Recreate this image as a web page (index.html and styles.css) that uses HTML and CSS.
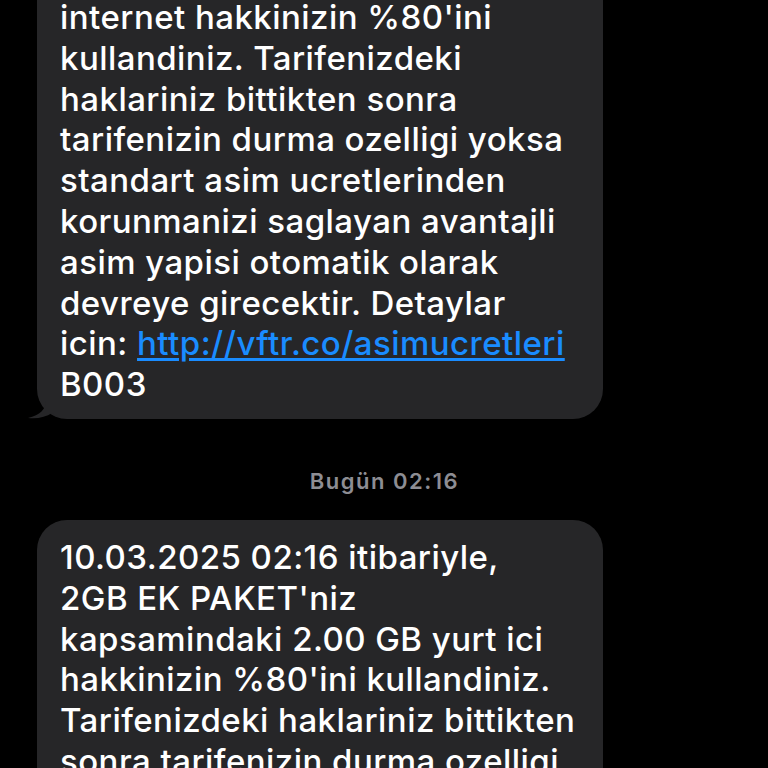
FILE: index.html
```
<!DOCTYPE html>
<html lang="tr">
<head>
<meta charset="utf-8">
<link rel="stylesheet" href="styles.css">
<title>Mesajlar</title>
</head>
<body>
<div class="thread">

    <div class="bubble bubble-cut">
        <p class="msg">
            <span class="line">internet hakkinizin %80'ini</span>
            <span class="line">kullandiniz. Tarifenizdeki</span>
            <span class="line">haklariniz bittikten sonra</span>
            <span class="line">tarifenizin durma ozelligi yoksa</span>
            <span class="line">standart asim ucretlerinden</span>
            <span class="line">korunmanizi saglayan avantajli</span>
            <span class="line">asim yapisi otomatik olarak</span>
            <span class="line">devreye girecektir. Detaylar</span>
            <span class="line">icin: <a class="link" href="#">http://vftr.co/asimucretleri</a></span>
            <span class="line">B003</span>
        </p>
        <svg class="tail" width="30" height="18" viewBox="0 0 30 18">
            <path d="M30 0 L18 0 C18 8 12 14 0 17 C10 18 18 16 24 12 C27 14 30 16 30 16 Z" fill="#262628"/>
        </svg>
    </div>

    <div class="stamp">Bugün 02:16</div>

    <div class="bubble">
        <p class="msg">
            <span class="line">10.03.2025 02:16 itibariyle,</span>
            <span class="line">2GB EK PAKET'niz</span>
            <span class="line">kapsamindaki 2.00 GB yurt ici</span>
            <span class="line">hakkinizin %80'ini kullandiniz.</span>
            <span class="line">Tarifenizdeki haklariniz bittikten</span>
            <span class="line">sonra tarifenizin durma ozelligi</span>
            <span class="line">yoksa standart asim ucretlerinden</span>
        </p>
    </div>

</div>
</body>
</html>
```
FILE: styles.css
```
html, body {
    margin: 0;
    background: #000000;
}

body {
    height: 768px;
    overflow: hidden;
    font-family: Inter, "Liberation Sans", sans-serif;
    color: #ffffff;
}

.thread {
    padding: 0 165px 0 37px;
}

.bubble {
    position: relative;
    width: 566px;
    box-sizing: border-box;
    background: #262628;
    border-radius: 30px;
    padding: 17px 22px 13px 23px;
}

.bubble-cut {
    margin-top: -3px;
    padding-top: 0;
    padding-bottom: 14px;
    border-top-left-radius: 0;
    border-top-right-radius: 0;
}

.msg {
    margin: 0;
    font-size: 33px;
    font-weight: 500;
    line-height: 40.8px;
    letter-spacing: 0.45px;
}

.line {
    display: block;
    white-space: nowrap;
}

.link {
    color: #1a8cff;
    text-decoration: underline;
    text-decoration-thickness: 3px;
    text-underline-offset: 3px;
}

.tail {
    position: absolute;
    left: -9px;
    bottom: 0;
}

.stamp {
    text-align: center;
    margin: 49px 0 26px 0;
    padding-left: 129px;
    font-size: 22px;
    font-weight: 600;
    line-height: 26px;
    letter-spacing: 1.5px;
    color: #8d8d93;
}
```
